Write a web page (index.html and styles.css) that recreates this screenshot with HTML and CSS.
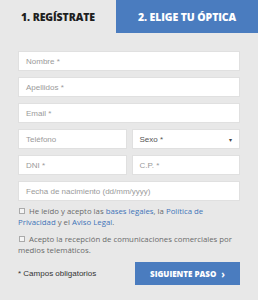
FILE: index.html
```html
<!DOCTYPE html>
<html>
<head>
  <meta charset="UTF-8" />
  <title>Regístrate</title>
  <link rel="stylesheet" href="styles.css">
</head>
<body>
  <div class="panel">
    <nav class="tabs">
      <div class="tab tab-active">1. REGÍSTRATE</div>
      <div class="tab tab-next">2. ELIGE TU ÓPTICA</div>
    </nav>

    <form class="form">
      <div class="field">Nombre *</div>
      <div class="field">Apellidos *</div>
      <div class="field">Email *</div>
      <div class="row">
        <div class="field">Teléfono</div>
        <div class="field select">Sexo *<span class="caret">▾</span></div>
      </div>
      <div class="row">
        <div class="field">DNI *</div>
        <div class="field">C.P. *</div>
      </div>
      <div class="field">Fecha de nacimiento (dd/mm/yyyy)</div>

      <p class="check">
        <span class="box"></span>He leído y acepto las <a href="#">bases legales</a>, la <a href="#">Política de Privacidad</a> y el <a href="#">Aviso Legal</a>.
      </p>
      <p class="check">
        <span class="box"></span>Acepto la recepción de comunicaciones comerciales por medios telemáticos.
      </p>

      <div class="footer">
        <span class="required">* Campos obligatorios</span>
        <a class="next" href="#">SIGUIENTE PASO <span class="chev">›</span></a>
      </div>
    </form>
  </div>
</body>
</html>
```

FILE: styles.css
```css
* {
  box-sizing: border-box;
}
body {
  margin: 0;
  background: #e8e8e8;
  font-family: "Liberation Sans", Arial, sans-serif;
}
.panel {
  width: 258px;
  height: 300px;
  background: #e8e8e8;
}
.tabs {
  display: flex;
  height: 33px;
}
.tab {
  display: flex;
  align-items: center;
  justify-content: center;
  font-family: "Open Sans", sans-serif;
  font-weight: 800;
  font-size: 10.5px;
  letter-spacing: -0.1px;
}
.tab-active {
  width: 116px;
  color: #1e1e1e;
}
.tab-next {
  flex: 1;
  background: #4a7cbf;
  color: #fff;
}
.form {
  padding: 18px 18px 0;
  display: flex;
  flex-direction: column;
  gap: 6px;
}
.row {
  display: flex;
  gap: 5px;
}
.row .field {
  flex: 1;
}
.field {
  height: 20px;
  background: #fff;
  border: 1px solid #e0e0e0;
  padding: 0 7px;
  display: flex;
  align-items: center;
  font-size: 8px;
  color: #9a9a9a;
}
.select {
  color: #555;
  justify-content: space-between;
}
.caret {
  font-size: 6px;
  color: #444;
}
.check {
  margin: 0;
  font-family: "Open Sans", sans-serif;
  font-size: 7.8px;
  line-height: 11px;
  color: #6a6a6a;
}
.check:first-of-type {
  margin-top: -1px;
}
.check a {
  color: #3f74b8;
  text-decoration: none;
}
.box {
  display: inline-block;
  width: 6px;
  height: 6px;
  border: 1px solid #aaa;
  background: #f4f4f4;
  margin: 0 4px 0 1px;
}
.footer {
  display: flex;
  align-items: center;
  justify-content: space-between;
  margin-top: 0;
}
.required {
  font-size: 8px;
  color: #333;
}
.next {
  width: 105px;
  height: 23px;
  background: #4a7cbf;
  color: #fff;
  text-decoration: none;
  display: flex;
  align-items: center;
  justify-content: center;
  gap: 5px;
  font-family: "Open Sans", sans-serif;
  font-weight: 800;
  font-size: 8px;
}
.chev {
  font-size: 10px;
  font-weight: 700;
}
```
